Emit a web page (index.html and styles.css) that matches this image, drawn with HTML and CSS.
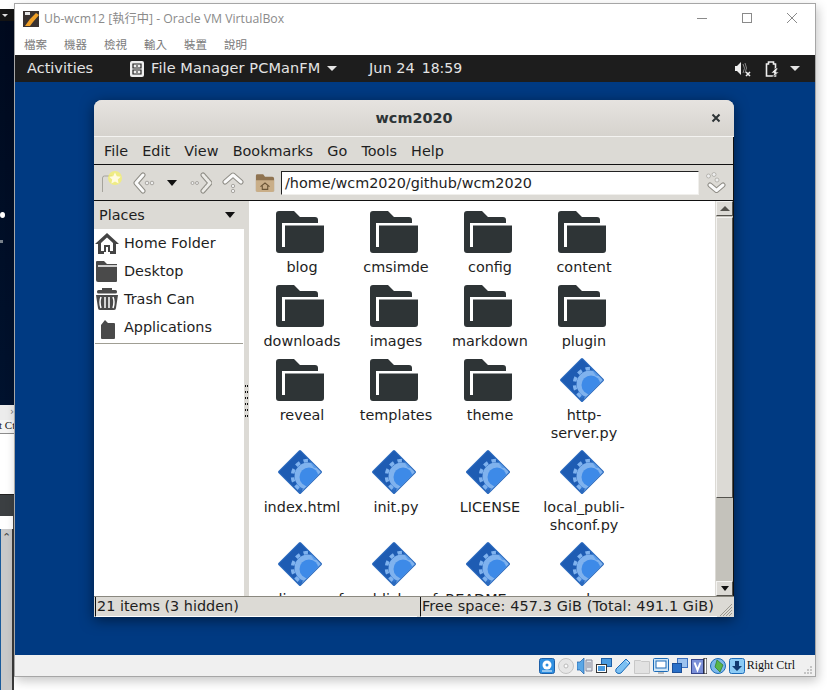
FILE: index.html
```html
<!DOCTYPE html>
<html lang="en">
<head>
<meta charset="utf-8">
<title>Ub-wcm12 - Oracle VM VirtualBox</title>
<link rel="stylesheet" href="styles.css">
</head>
<body>
<svg class="defs" width="0" height="0" aria-hidden="true">
  <defs>
    <symbol id="folder" viewBox="0 0 52 48">
      <path fill="#2e3436" d="M3 3H18L24 9H39a3 3 0 0 1 3 3V15H48V42a3 3 0 0 1-3 3H3a3 3 0 0 1-3-3V6a3 3 0 0 1 3-3z"/>
      <path fill="#fff" d="M6 15H48V17.500H9V39H6z"/>
      <path fill="#fff" d="M42 10h6v5h-6z"/>
    </symbol>
    <clipPath id="dclip"><path d="M24 3L45 24L24 45L3 24z"/></clipPath>
    <symbol id="file" viewBox="0 0 52 48">
      <path fill="#2f74cf" stroke="#2a69bd" stroke-width="3" stroke-linejoin="round" d="M24 3.500L44.500 24L24 44.500L3.500 24z"/>
      <g clip-path="url(#dclip)">
        <path fill="#1e5cb3" d="M24 2L2 24L18 40L26 26L40 18z"/>
        <circle cx="32" cy="28" r="15.500" fill="none" stroke="#7fb2ee" stroke-width="3.500" stroke-dasharray="4.500 4"/>
        <circle cx="32" cy="28" r="13.500" fill="#7fb2ee"/>
        <circle cx="33" cy="29" r="9.500" fill="#3d8ae8"/>
        <path fill="#3d8ae8" d="M30 8h16v12h-8z" opacity=".55"/>
      </g>
    </symbol>
  </defs>
</svg>

<div class="screen">
  <div class="peek">
    <div class="peek-blank"></div>
    <div class="peek-bar"><span class="peek-tri"></span></div>
    <div class="peek-dark"><span class="peek-dot"></span><span class="peek-dash"></span></div>
    <div class="peek-scroll">›</div>
    <div class="peek-ctrl">t Ctrl</div>
    <div class="peek-white"></div>
    <div class="peek-head"></div>
    <div class="peek-white2"></div>
    <div class="peek-list"><span class="peek-up">⌃</span></div>
  </div>

  <div class="vbox">
    <div class="vb-title">
      <svg class="vb-logo" width="16" height="16" viewBox="0 0 16 16">
        <rect width="16" height="16" fill="#3a3230"/>
        <path d="M2 1h5v3H2z" fill="#e8e8e8"/>
        <path d="M2 15L7 8L13 2L16 4L10 11L7 15z" fill="#f0a028"/>
      </svg>
      <span class="vb-name">Ub-wcm12 [執行中] - Oracle VM VirtualBox</span>
      <div class="vb-controls">
        <svg width="12" height="12" viewBox="0 0 12 12"><path d="M1 6.500H11" stroke="#8a8a8a" fill="none"/></svg>
        <svg width="12" height="12" viewBox="0 0 12 12"><rect x="1.500" y="1.500" width="9" height="9" stroke="#8a8a8a" fill="none"/></svg>
        <svg width="12" height="12" viewBox="0 0 12 12"><path d="M1 1L11 11M11 1L1 11" stroke="#8a8a8a" fill="none"/></svg>
      </div>
    </div>
    <div class="vb-menu">
      <span>檔案</span><span>機器</span><span>檢視</span><span>輸入</span><span>裝置</span><span>說明</span>
    </div>

    <div class="guest">
      <div class="topbar">
        <span class="tb-activities">Activities</span>
        <span class="tb-app">
          <svg width="14" height="16" viewBox="0 0 14 16"><rect width="14" height="16" rx="2" fill="#eee"/><path d="M3 3h8v4H3zM3 9h8v4H3z" fill="none" stroke="#222" stroke-width="1.200"/><path d="M6 5h2M6 11h2" stroke="#222"/></svg>
          <span class="tb-app-name">File Manager PCManFM</span>
          <span class="tb-tri"></span>
        </span>
        <span class="tb-clock">Jun 24<span class="tb-time">18:59</span></span>
        <span class="tb-tray">
          <svg width="16" height="16" viewBox="0 0 16 16"><path d="M0 5h2l4-4v13l-4-4H0z" fill="#eee"/><path d="M8 3q3 4 0 9M10 2q3 5 0 10" stroke="#888" fill="none"/><path d="M11 11l4 4M15 11l-4 4" stroke="#eee" stroke-width="1.600"/></svg>
          <svg class="tb-batt" width="15" height="16" viewBox="0 0 15 16"><path d="M1.500 3h2V1h5v2h2v12h-9z" fill="none" stroke="#eee" stroke-width="1.600"/><path d="M11 7L6 12h3l-1 4 6-5h-3l2-4z" fill="#eee" stroke="#1d1d1d" stroke-width=".6"/></svg>
          <span class="tb-tri"></span>
        </span>
      </div>

      <div class="desktop">
        <div class="fm">
          <div class="fm-title">
            <span class="fm-title-text">wcm2020</span>
            <svg class="fm-close" width="10" height="10" viewBox="0 0 10 10"><path d="M1.500 1.500L8.500 8.500M8.500 1.500L1.500 8.500" stroke="#2e3436" stroke-width="2"/></svg>
          </div>
          <div class="fm-menu">
            <span>File</span><span>Edit</span><span>View</span><span>Bookmarks</span><span>Go</span><span>Tools</span><span>Help</span>
          </div>
          <div class="fm-tools">
            <svg class="t-new" width="26" height="24" viewBox="0 0 26 24">
              <path d="M1.500 21V7q0-2 2-2H11" fill="none" stroke="#a5a39c"/>
              <circle cx="14" cy="7" r="7" fill="#f6f26a" opacity=".75"/>
              <path d="M14 1.500l1.800 3.700 4 .5-3 2.800.8 4-3.600-2-3.600 2 .8-4-3-2.800 4-.5z" fill="#fffbe0"/>
            </svg>
            <svg class="t-back" width="22" height="22" viewBox="0 0 22 22">
              <path d="M10 3L3 11L10 19" fill="none" stroke="#8f8d86" stroke-width="5" stroke-linejoin="round" stroke-linecap="round"/>
              <path d="M10 3L3 11L10 19" fill="none" stroke="#fafafa" stroke-width="3" stroke-linejoin="round" stroke-linecap="round"/>
              <circle cx="14" cy="11" r="1.800" fill="#eee" stroke="#8f8d86" stroke-width=".7"/>
              <circle cx="19" cy="11" r="1.800" fill="#eee" stroke="#8f8d86" stroke-width=".7"/>
            </svg>
            <span class="t-drop"></span>
            <svg class="t-fwd" width="22" height="22" viewBox="0 0 22 22">
              <circle cx="2.500" cy="11" r="1.500" fill="#eee" stroke="#8f8d86" stroke-width=".7"/>
              <circle cx="7" cy="11" r="1.500" fill="#eee" stroke="#8f8d86" stroke-width=".7"/>
              <path d="M13 3L20 11L13 19" fill="none" stroke="#8f8d86" stroke-width="5" stroke-linejoin="round" stroke-linecap="round"/>
              <path d="M13 3L20 11L13 19" fill="none" stroke="#ecebe7" stroke-width="3" stroke-linejoin="round" stroke-linecap="round" stroke-dasharray="2 1"/>
            </svg>
            <svg class="t-up" width="22" height="22" viewBox="0 0 22 22">
              <path d="M3 10L11 3L19 10" fill="none" stroke="#8f8d86" stroke-width="5" stroke-linejoin="round" stroke-linecap="round"/>
              <path d="M3 10L11 3L19 10" fill="none" stroke="#fafafa" stroke-width="3" stroke-linejoin="round" stroke-linecap="round"/>
              <circle cx="11" cy="14" r="1.700" fill="#eee" stroke="#8f8d86" stroke-width=".7"/>
              <circle cx="11" cy="19" r="1.700" fill="#eee" stroke="#8f8d86" stroke-width=".7"/>
            </svg>
            <svg class="t-home" width="20" height="20" viewBox="0 0 22 22">
              <path d="M1 3q0-1.500 1.500-1.500H9L11 4H19q2 0 2 2V20H1z" fill="#8f7350"/>
              <path d="M1 8H21V19q0 2-2 2H3q-2 0-2-2z" fill="#c9ae88"/>
              <path d="M6 15L11 11L16 15M8 14V18H14V14" fill="none" stroke="#6b5536" stroke-width="1.200"/>
            </svg>
            <div class="t-path">/home/wcm2020/github/wcm2020</div>
            <svg class="t-jump" width="20" height="22" viewBox="0 0 20 22">
              <circle cx="2.500" cy="4" r="2" fill="#eee" stroke="#a5a39c" stroke-width=".7"/>
              <circle cx="8" cy="2.500" r="2" fill="#eee" stroke="#a5a39c" stroke-width=".7"/>
              <circle cx="11" cy="8" r="2" fill="#eee" stroke="#a5a39c" stroke-width=".7"/>
              <path d="M4 13L10.500 18.500L17 13" fill="none" stroke="#8f8d86" stroke-width="5" stroke-linejoin="round" stroke-linecap="round"/>
              <path d="M4 13L10.500 18.500L17 13" fill="none" stroke="#fafafa" stroke-width="3" stroke-linejoin="round" stroke-linecap="round"/>
            </svg>
          </div>
          <div class="fm-main">
            <aside class="side">
              <div class="side-head"><span>Places</span><span class="side-tri"></span></div>
              <div class="side-list">
                <div class="side-item">
                  <svg width="24" height="24" viewBox="0 0 24 24"><path d="M12 2L0 13h3v10h6v-7h6v7h6V13h3z" fill="#444"/><path d="M6 12L12 6.500L18 12V20H15V14H9V20H6z" fill="#fff"/><path d="M9 14h6v7H9z" fill="#444"/><path d="M11 16h2v5h-2z" fill="#fff"/></svg>
                  Home Folder
                </div>
                <div class="side-item">
                  <svg width="24" height="24" viewBox="0 0 24 24"><path d="M1 3q0-1 1-1H9l3 3H22V22q0 1-1 1H3q-2 0-2-2z" fill="#4a4a4a"/><path d="M3 7H24" stroke="#fff" stroke-width="1.500"/></svg>
                  Desktop
                </div>
                <div class="side-item">
                  <svg width="24" height="24" viewBox="0 0 24 24"><rect x="2" y="3" width="20" height="3.500" rx="1.500" fill="#4a4a4a"/><rect x="7" y="1" width="10" height="2" fill="#4a4a4a"/><path d="M1 8H23L21 21q0 2-2 2H5q-2 0-2-2z" fill="#4a4a4a"/><path d="M6 10q-2 5 0 11M10 10V21M14 10V21M18 10q2 5 0 11" stroke="#fff" stroke-width="1.500" fill="none"/></svg>
                  Trash Can
                </div>
                <div class="side-item">
                  <svg width="24" height="24" viewBox="0 0 24 24"><path d="M10 5L6 10V23q0 1 1 1H19q1 0 1-1V9q0-1-1-1H13z" fill="#4a4a4a"/></svg>
                  Applications
                </div>
              </div>
              <div class="side-sep"></div>
            </aside>
            <div class="handle"><span></span><span></span><span></span><span></span><span></span><span></span></div>
            <div class="view">
              <div class="item"><svg class="ico"><use href="#folder"/></svg><span class="lbl">blog</span></div>
              <div class="item"><svg class="ico"><use href="#folder"/></svg><span class="lbl">cmsimde</span></div>
              <div class="item"><svg class="ico"><use href="#folder"/></svg><span class="lbl">config</span></div>
              <div class="item"><svg class="ico"><use href="#folder"/></svg><span class="lbl">content</span></div>
              <div class="item"><svg class="ico"><use href="#folder"/></svg><span class="lbl">downloads</span></div>
              <div class="item"><svg class="ico"><use href="#folder"/></svg><span class="lbl">images</span></div>
              <div class="item"><svg class="ico"><use href="#folder"/></svg><span class="lbl">markdown</span></div>
              <div class="item"><svg class="ico"><use href="#folder"/></svg><span class="lbl">plugin</span></div>
              <div class="item"><svg class="ico"><use href="#folder"/></svg><span class="lbl">reveal</span></div>
              <div class="item"><svg class="ico"><use href="#folder"/></svg><span class="lbl">templates</span></div>
              <div class="item"><svg class="ico"><use href="#folder"/></svg><span class="lbl">theme</span></div>
              <div class="item"><svg class="ico"><use href="#file"/></svg><span class="lbl">http-<br>server.py</span></div>
              <div class="item"><svg class="ico"><use href="#file"/></svg><span class="lbl">index.html</span></div>
              <div class="item"><svg class="ico"><use href="#file"/></svg><span class="lbl">init.py</span></div>
              <div class="item"><svg class="ico"><use href="#file"/></svg><span class="lbl">LICENSE</span></div>
              <div class="item"><svg class="ico"><use href="#file"/></svg><span class="lbl">local_publi-<br>shconf.py</span></div>
              <div class="item"><svg class="ico"><use href="#file"/></svg><span class="lbl">pelicanconf<br>.py</span></div>
              <div class="item"><svg class="ico"><use href="#file"/></svg><span class="lbl">publishconf<br>.py</span></div>
              <div class="item"><svg class="ico"><use href="#file"/></svg><span class="lbl">README.org</span></div>
              <div class="item"><svg class="ico"><use href="#file"/></svg><span class="lbl">send.py</span></div>
            </div>
            <div class="sbar">
              <div class="sb-btn"><span class="sb-up"></span></div>
              <div class="sb-thumb"></div>
              <div class="sb-trough"></div>
              <div class="sb-btn"><span class="sb-down"></span></div>
            </div>
          </div>
          <div class="fm-status">
            <div class="st-left">21 items (3 hidden)</div>
            <div class="st-right">Free space: 457.3 GiB (Total: 491.1 GiB)</div>
            <svg class="st-grip" width="16" height="18" viewBox="0 0 16 18"><path d="M15 5L3 17M15 8L6 17M15 11L9 17M15 14L12 17" stroke="#9a988f" fill="none"/></svg>
          </div>
        </div>
      </div>
    </div>

    <div class="vb-status">
      <svg width="16" height="16" viewBox="0 0 16 16"><rect x=".5" y=".5" width="15" height="15" rx="2" fill="#2f8fe0" stroke="#1c5fa8"/><circle cx="8" cy="7" r="4.500" fill="#fff"/><circle cx="8" cy="7" r="1.500" fill="#2f8fe0"/><path d="M3 13h10" stroke="#fff"/></svg>
      <svg width="16" height="16" viewBox="0 0 16 16"><circle cx="8" cy="8" r="7.500" fill="#e6e6e6" stroke="#c4c4c4"/><circle cx="8" cy="8" r="2" fill="#fafafa" stroke="#bbb"/></svg>
      <svg width="16" height="16" viewBox="0 0 16 16"><path d="M0 4h3l4-4v16l-4-4H0z" fill="#5aa7e6" stroke="#1c5fa8" stroke-width=".7"/><path d="M9 2h6v11H9z" fill="#dfe6ec" stroke="#889"/><path d="M10 5h4M10 7h4M10 9h4" stroke="#889"/></svg>
      <svg width="16" height="16" viewBox="0 0 16 16"><rect x="5.500" y=".5" width="10" height="8" fill="#4a9be0" stroke="#1c5fa8"/><rect x=".5" y="6.500" width="10" height="8" fill="#fff" stroke="#333"/><rect x="2" y="8" width="7" height="5" fill="#4a9be0"/></svg>
      <svg width="16" height="16" viewBox="0 0 16 16"><path d="M11 1l4 4-9 10q-2 1-4 0t-1-4z" fill="#7cc0f2" stroke="#1c6bb8"/><path d="M11.500 3l2 2" stroke="#fff"/></svg>
      <svg width="16" height="16" viewBox="0 0 16 16"><path d="M.5 2.500h6l1 1h8v12H.5z" fill="#e2e2e2" stroke="#c8c8c8"/></svg>
      <svg width="16" height="16" viewBox="0 0 16 16"><rect x=".5" y=".5" width="15" height="13" rx="1" fill="#cfe6f7" stroke="#1c6bb8"/><rect x="3" y="3" width="10" height="7" fill="#fff" stroke="#1c6bb8"/><path d="M5 15h6" stroke="#888"/></svg>
      <svg width="16" height="16" viewBox="0 0 16 16"><rect x="5.500" y=".5" width="10" height="9" fill="#9cc2ee" stroke="#3a6fc0"/><rect x=".5" y="5.500" width="9" height="9" fill="#2a70c8" stroke="#1c4f98"/></svg>
      <svg width="16" height="16" viewBox="0 0 16 16"><rect x=".5" y="1.500" width="12" height="14" fill="#7a8fd8" stroke="#34448c"/><path d="M3.500 4.500L6.500 12L9.500 4.500" fill="none" stroke="#fff" stroke-width="2"/><rect x="13" y="0" width="3" height="16" fill="#fff" stroke="#111"/></svg>
      <svg width="16" height="16" viewBox="0 0 16 16"><circle cx="8" cy="8" r="7.500" fill="#7cb8ea" stroke="#1c6bb8"/><path d="M7 2l6 5-3 7-5-5z" fill="#59b64a" stroke="#2d7a22" stroke-width=".7"/></svg>
      <svg width="16" height="16" viewBox="0 0 16 16"><rect x=".5" y=".5" width="15" height="15" rx="2" fill="#8ccbf5" stroke="#1c6bb8"/><path d="M6 3h4v5h3L8 13L3 8h3z" fill="#123a70"/></svg>
      <span class="vb-host">Right Ctrl</span>
      <svg class="vb-grip" width="8" height="8" viewBox="0 0 8 8"><path d="M6 0h2v2H6zM3 3h2v2H3zM6 3h2v2H6zM0 6h2v2H0zM3 6h2v2H3zM6 6h2v2H6z" fill="#c4c4c4"/></svg>
    </div>
  </div>
</div>
</body>
</html>
```

FILE: styles.css
```css
html, body { margin: 0; padding: 0; background: #fff; }
.defs { position: absolute; }
.screen {
  position: relative;
  width: 827px;
  height: 690px;
  overflow: hidden;
  background: #fff;
  font-family: "DejaVu Sans", sans-serif;
  font-size: 14.4px;
  color: #1e1e1e;
}

/* Sliver of the host desktop at the left edge */
.peek { width: 14px; height: 690px; display: flex; flex-direction: column; overflow: hidden; }
.peek-blank { height: 9px; background: #fff; }
.peek-bar { height: 12px; background: #141414; display: flex; align-items: center; padding-left: 2px; }
.peek-tri { border: 3px solid transparent; border-top: 3px solid #ddd; border-bottom: 0; }
.peek-dark { height: 384px; background: linear-gradient(#000a1e, #00122e); display: flex; flex-direction: column; }
.peek-dot { width: 5px; height: 6px; margin-top: 191px; border-radius: 50%; background: #fff; }
.peek-dash { width: 3px; height: 3px; margin-top: 22px; background: #77808a; }
.peek-scroll { height: 15px; line-height: 13px; background: #ececec; color: #777; font-size: 10px; text-align: right; }
.peek-ctrl { height: 13px; line-height: 11px; background: #f4f4f4; border-bottom: 1px solid #8c8c8c; color: #222; font-family: "Liberation Serif", serif; font-size: 11px; white-space: nowrap; margin-left: -1px; }
.peek-white { height: 60px; background: #fff; }
.peek-head { height: 22px; background: #3b3f42; border-top: 1px solid #222; box-sizing: border-box; }
.peek-white2 { height: 13px; background: #fff; border-right: 1px solid #444; }
.peek-list { flex: 1; background: #c9c9c9; border-left: 1px solid #1a5a9a; border-right: 2px solid #3a3a3a; text-align: center; color: #444; font-size: 11px; line-height: 18px; }
.peek-up { display: block; }

/* VirtualBox host window */
.vbox {
  position: absolute;
  left: 14px;
  top: 3px;
  width: 802px;
  height: 674px;
  box-sizing: border-box;
  display: flex;
  flex-direction: column;
  background: #fff;
  border: 1px solid #a6a6a6;
  box-shadow: 2px 4px 10px rgba(0, 0, 0, .22);
}
.vb-title { height: 28px; display: flex; align-items: center; padding-left: 8px; flex: none; }
.vb-logo { flex: none; margin-top: 1px; }
.vb-name { margin-left: 5px; font-family: "Open Sans", "Noto Sans CJK TC", sans-serif; font-size: 12.250px; color: #8b8b8b; white-space: nowrap; }
.vb-controls { margin-left: auto; display: flex; gap: 33px; padding-right: 17px; margin-top: -1px; }
.vb-menu { height: 23px; flex: none; display: flex; gap: 17px; padding-left: 9px; align-items: center; font-family: "Noto Sans CJK TC", sans-serif; font-size: 11.500px; color: #7b7b7b; }

.guest { flex: 1; display: flex; flex-direction: column; min-height: 0; }
.topbar { height: 27px; flex: none; display: flex; align-items: center; background: #1d1d1d; color: #e4e4e4; font-size: 14.500px; line-height: 25px; padding-left: 12px; }
.tb-activities { width: 103px; }
.tb-app { display: flex; align-items: center; gap: 7px; width: 239px; white-space: nowrap; }
.tb-app-name { letter-spacing: .1px; }
.tb-tri { display: inline-block; border: 5px solid transparent; border-top: 5px solid #e4e4e4; border-bottom: 0; flex: none; }
.tb-clock { white-space: nowrap; }
.tb-time { margin-left: 7px; font-size: 14px; }
.tb-tray { margin-left: auto; display: flex; align-items: center; gap: 14px; padding-right: 15px; }
.tb-batt { margin-right: -4px; }

.desktop { flex: 1; position: relative; background: #003a82; }

/* PCManFM window */
.fm {
  position: absolute;
  left: 79px;
  top: 18px;
  width: 640px;
  height: 517px;
  display: flex;
  flex-direction: column;
  background: #dcdad5;
  border-radius: 8px 8px 0 0;
  box-shadow: 0 3px 14px rgba(0, 0, 0, .5);
}
.fm-title { height: 36px; flex: none; display: flex; align-items: center; justify-content: center; position: relative; background: linear-gradient(#e6e3e0, #d6d3ce); border-radius: 8px 8px 0 0; border-bottom: 1px solid #f4f3f1; }
.fm-title-text { font-weight: bold; color: #2e3436; }
.fm-close { position: absolute; right: 13px; top: 13px; }
.fm-menu { height: 27px; flex: none; display: flex; align-items: center; gap: 14.200px; padding-left: 10px; border-bottom: 1px solid #111; border-right: 1px solid #111; }
.fm-tools { height: 35px; flex: none; display: flex; align-items: center; border-bottom: 1px solid #111; border-right: 1px solid #111; padding-left: 7px; }
.t-new { margin-right: 6px; }
.t-back { margin-right: 12px; }
.t-drop { border: 5px solid transparent; border-top: 6px solid #111; border-bottom: 0; margin-right: 13px; }
.t-fwd { margin-right: 10px; }
.t-up { margin-right: 11px; }
.t-home { margin-right: 6px; }
.t-path { width: 418px; height: 24px; box-sizing: border-box; line-height: 23px; padding-left: 3px; background: #fff; border-top: 1px solid #222; border-left: 1px solid #222; border-right: 1px solid #f0efec; border-bottom: 1px solid #f0efec; white-space: nowrap; }
.t-jump { margin-left: 7px; }

.fm-main { flex: 1; min-height: 0; display: flex; background: #fff; border-right: 1px solid #111; }
.side { width: 150px; flex: none; background: #fff; }
.side-head { height: 28px; display: flex; align-items: center; justify-content: space-between; padding: 0 14px 0 5px; background: #dcdad5; margin-right: -5px; }
.side-tri { border: 5px solid transparent; border-top: 6px solid #111; border-bottom: 0; }
.side-item { height: 28px; display: flex; align-items: center; gap: 5px; padding-left: 1px; white-space: nowrap; }
.side-sep { height: 1px; margin: 2px 1px 0; background: #a09e94; }
.handle { width: 5px; flex: none; background: #dcdad5; display: flex; flex-direction: column; align-items: center; gap: 4px; padding-top: 184px; box-sizing: border-box; }
.handle span { width: 3px; height: 2px; border-left: 1px solid #111; border-right: 1px solid #111; box-sizing: border-box; }

.view { flex: 1; min-width: 0; overflow: hidden; display: grid; grid-template-columns: repeat(4, 94px); align-content: start; row-gap: 6px; padding: 7px 0 0 6px; }
.item { display: flex; flex-direction: column; align-items: center; }
.ico { width: 52px; height: 48px; flex: none; margin-bottom: 2px; }
.lbl { line-height: 18px; text-align: center; white-space: nowrap; }

.sbar { width: 18px; flex: none; display: flex; flex-direction: column; background: #c4c2bb; border-left: 1px solid #dcdad5; box-sizing: border-box; }
.sb-btn { height: 15px; flex: none; display: flex; align-items: center; justify-content: center; background: #dcdad5; border: 1px solid #55534e; border-left-color: #f4f3f1; border-top-color: #f4f3f1; box-sizing: border-box; }
.sb-up { border: 5px solid transparent; border-bottom: 5px solid #55534e; border-top: 0; }
.sb-down { border: 4px solid transparent; border-top: 5px solid #111; border-bottom: 0; }
.sb-thumb { height: 281px; flex: none; margin-top: 1px; background: #dcdad5; border: 1px solid #55534e; border-left-color: #f4f3f1; border-top-color: #f4f3f1; box-sizing: border-box; }
.sb-trough { flex: 1; }

.fm-status { height: 21px; flex: none; display: flex; align-items: stretch; line-height: 18px; white-space: nowrap; border-top: 1px solid #8a887f; box-sizing: border-box; }
.st-left { width: 322px; flex: none; box-sizing: border-box; padding-left: 1px; margin-left: 1px; border-left: 1px solid #111; border-bottom: 1px solid #fff; }
.st-right { width: 297px; flex: none; box-sizing: border-box; margin-left: 3px; padding-left: 1px; border-left: 1px solid #111; border-bottom: 1px solid #fff; letter-spacing: .12px; }
.st-grip { flex: none; margin-top: 2px; }

/* VirtualBox status strip */
.vb-status { height: 21px; flex: none; display: flex; align-items: center; gap: 3px; justify-content: flex-end; padding-right: 3px; background: #f0f0f0; }
.vb-host { font-family: "Liberation Serif", serif; font-size: 12px; color: #111; margin-left: -1px; white-space: nowrap; }
.vb-grip { margin: 8px 0 0 6px; }
```
